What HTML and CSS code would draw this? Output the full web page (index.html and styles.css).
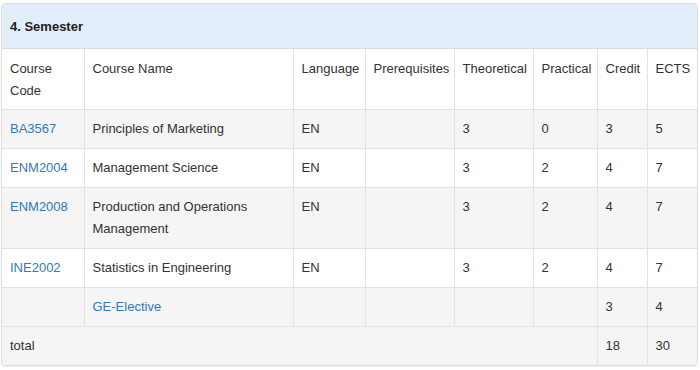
FILE: index.html
```html
<!DOCTYPE html>
<html lang="en">
<head>
<meta charset="utf-8">
<title>4. Semester</title>
<link rel="stylesheet" href="styles.css">
</head>
<body>
<div class="page">
  <div class="panel">
    <div class="panel-heading">4. Semester</div>
    <table class="curriculum">
      <colgroup>
        <col class="c-code">
        <col class="c-name">
        <col class="c-lang">
        <col class="c-pre">
        <col class="c-theo">
        <col class="c-prac">
        <col class="c-credit">
        <col class="c-ects">
      </colgroup>
      <thead>
        <tr>
          <th>Course Code</th>
          <th>Course Name</th>
          <th>Language</th>
          <th>Prerequisites</th>
          <th>Theoretical</th>
          <th>Practical</th>
          <th>Credit</th>
          <th>ECTS</th>
        </tr>
      </thead>
      <tbody>
        <tr class="stripe">
          <td><a href="#">BA3567</a></td>
          <td>Principles of Marketing</td>
          <td>EN</td>
          <td></td>
          <td>3</td>
          <td>0</td>
          <td>3</td>
          <td>5</td>
        </tr>
        <tr>
          <td><a href="#">ENM2004</a></td>
          <td>Management Science</td>
          <td>EN</td>
          <td></td>
          <td>3</td>
          <td>2</td>
          <td>4</td>
          <td>7</td>
        </tr>
        <tr class="stripe">
          <td><a href="#">ENM2008</a></td>
          <td>Production and Operations Management</td>
          <td>EN</td>
          <td></td>
          <td>3</td>
          <td>2</td>
          <td>4</td>
          <td>7</td>
        </tr>
        <tr>
          <td><a href="#">INE2002</a></td>
          <td>Statistics in Engineering</td>
          <td>EN</td>
          <td></td>
          <td>3</td>
          <td>2</td>
          <td>4</td>
          <td>7</td>
        </tr>
        <tr class="stripe">
          <td></td>
          <td><a href="#">GE-Elective</a></td>
          <td></td>
          <td></td>
          <td></td>
          <td></td>
          <td>3</td>
          <td>4</td>
        </tr>
      </tbody>
      <tfoot>
        <tr class="stripe">
          <td colspan="6">total</td>
          <td>18</td>
          <td>30</td>
        </tr>
      </tfoot>
    </table>
  </div>
</div>
</body>
</html>
```

FILE: styles.css
```css
html, body {
  margin: 0;
  padding: 0;
  background: #ffffff;
}

body {
  font-family: "Liberation Sans", Arial, Helvetica, sans-serif;
  font-size: 13px;
  color: #333333;
}

.page {
  padding: 3px 2px 3px 1px;
}

.panel {
  border: 1px solid #dcdcdc;
  border-radius: 4px;
  overflow: hidden;
  box-shadow: 0 1px 1px rgba(0, 0, 0, 0.06);
  background: #ffffff;
}

.panel-heading {
  background: #e2eef9;
  border-bottom: 1px solid #dcdcdc;
  padding: 12px 8px 10px;
  line-height: 22px;
  font-weight: bold;
  color: #222222;
}

.curriculum {
  width: 100%;
  table-layout: fixed;
  border-collapse: collapse;
  border-spacing: 0;
}

.c-code { width: 82px; }
.c-name { width: 209px; }
.c-lang { width: 72px; }
.c-pre { width: 89px; }
.c-theo { width: 79px; }
.c-prac { width: 64px; }
.c-credit { width: 50px; }
.c-ects { width: auto; }

.curriculum th,
.curriculum td {
  padding: 8px;
  line-height: 22px;
  text-align: left;
  vertical-align: top;
  font-weight: normal;
  border: 1px solid #e2e2e2;
}

.curriculum thead th {
  padding-top: 9px;
  padding-bottom: 7px;
}

.curriculum tr > :first-child {
  border-left: 0;
}

.curriculum tr > :last-child {
  border-right: 0;
}

.curriculum thead tr > * {
  border-top: 0;
}

.curriculum tfoot tr > * {
  border-bottom: 0;
}

.curriculum .stripe {
  background: #f5f5f5;
}

.curriculum a {
  color: #337ab7;
  text-decoration: none;
}
```
